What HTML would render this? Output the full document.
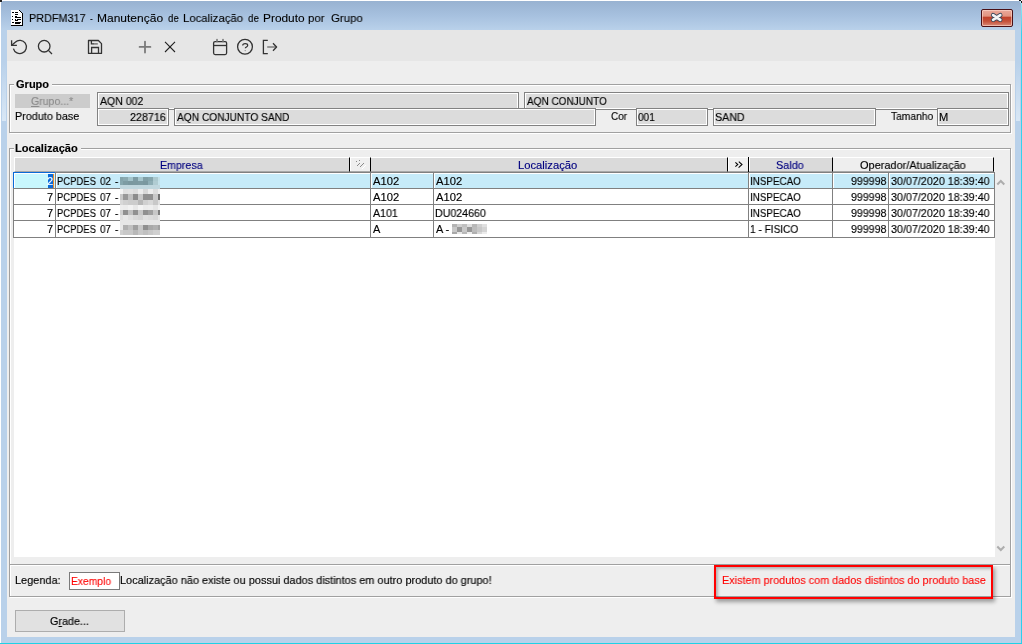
<!DOCTYPE html><html><head><meta charset="utf-8"><style>
*{margin:0;padding:0;box-sizing:border-box}
html,body{width:1022px;height:644px;overflow:hidden;background:#fff;font-family:"Liberation Sans",sans-serif;font-size:11px;color:#000}
.a{position:absolute}
.t{line-height:14px;height:14px;white-space:nowrap;will-change:transform;-webkit-text-stroke:0.15px currentColor}
.b{font-weight:bold}
</style></head><body>
<div class="a" style="left:1px;top:1px;width:1020px;height:642px;background:linear-gradient(#98b2d1 0px,#a7c1df 15px,#b9d1ea 29px,#b9d1ea 100%);border-radius:2px 2px 0 0"></div>
<div class="a" style="left:1021px;top:3px;width:1px;height:641px;background:linear-gradient(#9ce6f4,#36d2ee 30px,#2ccfee 100%)"></div>
<div class="a" style="left:1019px;top:0;width:2px;height:1px;background:#111"></div>
<div class="a" style="left:1021px;top:1px;width:1px;height:2px;background:#111"></div>
<div class="a" style="left:1020px;top:1px;width:1px;height:2px;background:#bdeefa"></div>
<div class="a" style="left:0;top:643px;width:1022px;height:1px;background:#1ed2e6"></div>
<div class="a" style="left:7px;top:30px;width:1008px;height:607px;background:#eeeeee"></div>
<div class="a" style="left:1016px;top:62px;width:4px;height:59px;background:linear-gradient(rgba(217,231,245,0),#d9e7f5)"></div>
<div class="a" style="left:2px;top:62px;width:4px;height:59px;background:linear-gradient(rgba(217,231,245,0),#d9e7f5)"></div>
<div class="a" style="left:7px;top:30px;width:1008px;height:31px;background:#e6e6e6"></div>
<svg class="a" style="left:8px;top:8px" width="18" height="20" viewBox="8 8 18 20" shape-rendering="crispEdges">
 <path d="M11 10 H19 L22 13 V25 H11 Z" fill="#fff"/>
 <g fill="#000">
 <rect x="22" y="13" width="1" height="13"/><rect x="11" y="25" width="12" height="1"/>
 <rect x="19" y="10" width="1" height="1"/><rect x="20" y="11" width="1" height="1"/><rect x="21" y="12" width="1" height="1"/><rect x="22" y="13" width="1" height="1"/>
 <rect x="12" y="12" width="2" height="1"/><rect x="15" y="12" width="3" height="1"/>
 <rect x="15" y="14" width="3" height="1"/>
 <rect x="12" y="16" width="1" height="1"/><rect x="15" y="16" width="2" height="1"/><rect x="15" y="17" width="6" height="1"/>
 <rect x="12" y="19" width="1" height="1"/><rect x="15" y="19" width="1" height="1"/><rect x="17" y="19" width="4" height="1"/><rect x="15" y="20" width="3" height="1"/>
 <rect x="12" y="22" width="2" height="1"/><rect x="15" y="22" width="6" height="1"/><rect x="15" y="23" width="5" height="1"/>
 </g>
</svg>
<div class="a" style="left:0;top:0;width:2px;height:2px;background:#222"></div>
<div class="a t " style="left:29.07px;top:11px;transform:scaleX(0.9283);transform-origin:0 0;font-size:11.7px;-webkit-text-stroke:0.1px currentColor">PRDFM317</div>
<div class="a t " style="left:90.10px;top:11px;transform:scaleX(0.7250);transform-origin:0 0;font-size:11.7px;-webkit-text-stroke:0.1px currentColor">-</div>
<div class="a t " style="left:96.97px;top:11px;transform:scaleX(1.0270);transform-origin:0 0;font-size:11.7px;-webkit-text-stroke:0.1px currentColor">Manutenção</div>
<div class="a t " style="left:168.00px;top:11px;transform:scaleX(0.8308);transform-origin:0 0;font-size:11.7px;-webkit-text-stroke:0.1px currentColor">de</div>
<div class="a t " style="left:182.73px;top:11px;transform:scaleX(0.9721);transform-origin:0 0;font-size:11.7px;-webkit-text-stroke:0.1px currentColor">Localização</div>
<div class="a t " style="left:248.00px;top:11px;transform:scaleX(0.8462);transform-origin:0 0;font-size:11.7px;-webkit-text-stroke:0.1px currentColor">de</div>
<div class="a t " style="left:262.98px;top:11px;transform:scaleX(1.0175);transform-origin:0 0;font-size:11.7px;-webkit-text-stroke:0.1px currentColor">Produto</div>
<div class="a t " style="left:308.42px;top:11px;transform:scaleX(0.9750);transform-origin:0 0;font-size:11.7px;-webkit-text-stroke:0.1px currentColor">por</div>
<div class="a t " style="left:330.90px;top:11px;transform:scaleX(0.9781);transform-origin:0 0;font-size:11.7px;-webkit-text-stroke:0.1px currentColor">Grupo</div>
<div class="a" style="left:981px;top:9px;width:32px;height:18px;border:1px solid #4a1015;border-radius:2px;background:linear-gradient(#eaa99b 0%,#e2937f 40%,#c0402a 42%,#c55039 70%,#d98a78 100%);box-shadow:inset 0 0 0 1px rgba(255,220,210,.6)"></div>
<svg class="a" style="left:981px;top:9px" width="32" height="18" viewBox="981 9 32 18">
 <path d="M993.1 15.1 L1000.3 19.8 M1000.3 15.1 L993.1 19.8" stroke="#37465a" stroke-width="4.4" stroke-linecap="round"/>
 <path d="M993.1 15.1 L1000.3 19.8 M1000.3 15.1 L993.1 19.8" stroke="#f4f4f4" stroke-width="2.7" stroke-linecap="round"/>
</svg>
<svg class="a" style="left:7px;top:30px" width="290" height="31" viewBox="7 30 290 31" fill="none" stroke="#333" stroke-width="1.3">
 <path d="M13.4 48.6 A6.6 6.6 0 1 0 15.2 42.2 L11.8 45.3" />
 <path d="M11.6 40.3 V45.4 H16.9" stroke-linejoin="miter"/>
 <circle cx="44.2" cy="46.2" r="5.8"/>
 <path d="M48.4 50.4 L52 54"/>
 <path d="M88.5 40.5 H98.4 L101.5 43.6 V53.4 H88.5 Z" stroke-linejoin="round"/>
 <path d="M91.4 40.6 V43.9 H94" />
 <path d="M94 43.9 H97.8" stroke="#666"/>
 <path d="M91.6 53.4 V47.5 H98.5 V53.4" />
 <path d="M145 41.6 V52.6 M139.6 46.9 H150.4" stroke="#7a7a7a" stroke-width="1.8" stroke-linecap="round"/>
 <path d="M165 41.8 L175 52 M175 41.8 L165 52" stroke="#222" stroke-width="1.1"/>
 <rect x="213.6" y="41.6" width="13" height="13" rx="1.5"/>
 <path d="M213.8 45.5 H226.4"/>
 <path d="M217 39.6 V41.6 M223 39.6 V41.6" stroke="#777" stroke-width="1.6" stroke-linecap="round"/>
 <circle cx="245" cy="46.8" r="7.4"/>
 <path d="M242.7 45.6 C242.7 44.2 243.8 43.7 245.2 43.7 C246.6 43.7 247.7 44.4 247.7 45.5 C247.7 46.9 245.3 47 245.3 48.2" stroke-width="1.2"/>
 <circle cx="245.2" cy="50.6" r="0.7" fill="#888" stroke="none"/>
 <path d="M267.8 40.4 H263.4 V53.6 H267.8"/>
 <path d="M267.2 47 H276" stroke="#888" stroke-width="1.7"/>
 <path d="M273 43.3 L276.6 47 L273 50.7" stroke-linejoin="round"/>
</svg>
<div class="a" style="left:10px;top:85px;width:1002px;height:49px;border:1px solid #fff"></div>
<div class="a" style="left:9px;top:84px;width:1002px;height:49px;border:1px solid #a0a0a0"></div>
<div class="a" style="left:14px;top:78px;width:38px;height:12px;background:#eeeeee"></div>
<div class="a t " style="left:15.90px;top:77px;transform:scaleX(1.0030);transform-origin:0 0;font-weight:700">Grupo</div>
<div class="a" style="left:15px;top:94px;width:75px;height:14px;background:#cccccc"></div>
<div class="a t " style="left:30.80px;top:94px;transform:scaleX(0.9568);transform-origin:0 0;color:#8c8c8c"><span style="text-decoration:underline">G</span>rupo...*</div>
<div class="a t " style="left:14.92px;top:109px;transform:scaleX(0.9828);transform-origin:0 0">Produto base</div>
<div class="a" style="left:97px;top:92px;width:422px;height:18px;border:1px solid #828282;background:#dcdcdc;box-shadow:inset 1px 1px 0 #fff,inset -1px -1px 0 #fff"></div>
<div class="a t " style="left:100.30px;top:94px;transform:scaleX(0.9556);transform-origin:0 0">AQN 002</div>
<div class="a" style="left:524px;top:92px;width:485px;height:18px;border:1px solid #828282;background:#dcdcdc;box-shadow:inset 1px 1px 0 #fff,inset -1px -1px 0 #fff"></div>
<div class="a t " style="left:527.00px;top:94px;transform:scaleX(0.9091);transform-origin:0 0">AQN CONJUNTO</div>
<div class="a" style="left:97px;top:108px;width:72px;height:18px;border:1px solid #828282;background:#dcdcdc;box-shadow:inset 1px 1px 0 #fff,inset -1px -1px 0 #fff"></div>
<div class="a t " style="left:130.10px;top:110px;transform:scaleX(0.9778);transform-origin:0 0">228716</div>
<div class="a" style="left:174px;top:108px;width:422px;height:18px;border:1px solid #828282;background:#dcdcdc;box-shadow:inset 1px 1px 0 #fff,inset -1px -1px 0 #fff"></div>
<div class="a t " style="left:177.00px;top:110px;transform:scaleX(0.9256);transform-origin:0 0">AQN CONJUNTO SAND</div>
<div class="a t " style="left:610.60px;top:109px;transform:scaleX(0.9056);transform-origin:0 0">Cor</div>
<div class="a" style="left:636px;top:108px;width:72px;height:18px;border:1px solid #828282;background:#dcdcdc;box-shadow:inset 1px 1px 0 #fff,inset -1px -1px 0 #fff"></div>
<div class="a t " style="left:638.30px;top:110px;transform:scaleX(0.9167);transform-origin:0 0">001</div>
<div class="a" style="left:713px;top:108px;width:163px;height:18px;border:1px solid #828282;background:#dcdcdc;box-shadow:inset 1px 1px 0 #fff,inset -1px -1px 0 #fff"></div>
<div class="a t " style="left:714.53px;top:110px;transform:scaleX(0.9724);transform-origin:0 0">SAND</div>
<div class="a t " style="left:891.10px;top:109px;transform:scaleX(0.9333);transform-origin:0 0">Tamanho</div>
<div class="a" style="left:937px;top:108px;width:72px;height:18px;border:1px solid #828282;background:#dcdcdc;box-shadow:inset 1px 1px 0 #fff,inset -1px -1px 0 #fff"></div>
<div class="a t " style="left:938.59px;top:110px;transform:scaleX(1.0125);transform-origin:0 0">M</div>
<div class="a" style="left:10px;top:149px;width:1002px;height:417px;border:1px solid #fff"></div>
<div class="a" style="left:9px;top:148px;width:1002px;height:417px;border:1px solid #a0a0a0"></div>
<div class="a" style="left:14px;top:142px;width:67px;height:12px;background:#eeeeee"></div>
<div class="a t " style="left:15.19px;top:141px;transform:scaleX(1.0066);transform-origin:0 0;font-weight:700">Localização</div>
<div class="a" style="left:14px;top:172px;width:981px;height:385px;background:#fff"></div>
<div class="a" style="left:14px;top:157px;width:980px;height:15px;background:#dadada;border-top:1px solid #fff;border-left:1px solid #fff;border-bottom:1px solid #a8a8a8"></div>
<div class="a" style="left:349px;top:157px;width:22px;height:15px;background:#efefef;border-left:1px solid #000;border-right:1px solid #000;border-top:1px solid #fff;border-bottom:1px solid #a8a8a8;box-shadow:inset 1px 0 0 #fff"></div>
<div class="a" style="left:727px;top:157px;width:22px;height:15px;background:#efefef;border-left:1px solid #000;border-right:1px solid #000;border-top:1px solid #fff;border-bottom:1px solid #a8a8a8;box-shadow:inset 1px 0 0 #fff"></div>
<div class="a" style="left:748px;top:157px;width:1px;height:15px;background:#000"></div>
<div class="a" style="left:749px;top:158px;width:1px;height:13px;background:#fff"></div>
<div class="a" style="left:832px;top:157px;width:162px;height:15px;background:#eeeeee;border-top:1px solid #fff;border-left:1px solid #000;border-right:1px solid #000;border-bottom:1px solid #a8a8a8"></div>
<div class="a t " style="left:159.73px;top:158px;transform:scaleX(0.9674);transform-origin:0 0;color:#000080">Empresa</div>
<div class="a t " style="left:517.98px;top:158px;transform:scaleX(1.0193);transform-origin:0 0;color:#000080">Localização</div>
<div class="a t " style="left:775.71px;top:158px;transform:scaleX(0.9852);transform-origin:0 0;color:#000080">Saldo</div>
<div class="a t " style="left:859.50px;top:158px;transform:scaleX(0.9943);transform-origin:0 0">Operador/Atualização</div>
<svg class="a" style="left:349px;top:157px" width="22" height="15" viewBox="349 157 22 15">
 <g fill="#8a8a8a"><rect x="356" y="161" width="1" height="1"/><rect x="359" y="160" width="1" height="1"/>
 <rect x="357" y="165" width="1" height="1"/><rect x="358" y="164" width="1" height="1"/><rect x="359" y="163" width="1" height="1"/>
 <rect x="360" y="166" width="1" height="1"/><rect x="361" y="165" width="1" height="1"/><rect x="362" y="164" width="1" height="1"/><rect x="363" y="163" width="1" height="1"/></g>
 <g fill="#fff"><rect x="362" y="168" width="1" height="1"/><rect x="363" y="167" width="1" height="1"/><rect x="364" y="166" width="1" height="1"/><rect x="365" y="165" width="1" height="1"/></g>
</svg>
<svg class="a" style="left:727px;top:157px" width="22" height="15" viewBox="727 157 22 15">
 <path d="M735.4 162.3 L737.8 164.5 L735.4 166.7 M738.8 161.6 L742 164.5 L738.6 167.6" fill="none" stroke="#000" stroke-width="1.05"/>
</svg>
<div class="a" style="left:14px;top:173px;width:980px;height:15px;background:#c6ebf9;border-top:1px solid #fff"></div>
<div class="a" style="left:13px;top:172px;width:982px;height:1px;background:#808080"></div>
<div class="a" style="left:13px;top:188px;width:982px;height:1px;background:#808080"></div>
<div class="a" style="left:13px;top:204px;width:982px;height:1px;background:#808080"></div>
<div class="a" style="left:13px;top:220px;width:982px;height:1px;background:#808080"></div>
<div class="a" style="left:13px;top:237px;width:982px;height:1px;background:#808080"></div>
<div class="a" style="left:13px;top:172px;width:1px;height:66px;background:#808080"></div>
<div class="a" style="left:994px;top:172px;width:1px;height:66px;background:#808080"></div>
<div class="a" style="left:55px;top:172px;width:1px;height:66px;background:#808080"></div>
<div class="a" style="left:56px;top:173px;width:1px;height:15px;background:#fff"></div>
<div class="a" style="left:370px;top:172px;width:1px;height:66px;background:#808080"></div>
<div class="a" style="left:371px;top:173px;width:1px;height:15px;background:#fff"></div>
<div class="a" style="left:433px;top:172px;width:1px;height:66px;background:#808080"></div>
<div class="a" style="left:434px;top:173px;width:1px;height:15px;background:#fff"></div>
<div class="a" style="left:748px;top:172px;width:1px;height:66px;background:#808080"></div>
<div class="a" style="left:749px;top:173px;width:1px;height:15px;background:#fff"></div>
<div class="a" style="left:832px;top:172px;width:1px;height:66px;background:#808080"></div>
<div class="a" style="left:833px;top:173px;width:1px;height:15px;background:#fff"></div>
<div class="a" style="left:888px;top:172px;width:1px;height:66px;background:#808080"></div>
<div class="a" style="left:889px;top:173px;width:1px;height:15px;background:#fff"></div>
<div class="a" style="left:13px;top:172px;width:42px;height:16px;background:#c8f7fd;border-top:1px solid #0a6ad8;border-left:1px solid #0a6ad8;box-shadow:inset 1px 1px 0 #fff"></div>
<div class="a" style="left:48px;top:174px;width:5px;height:14px;background:#0a6ad8"></div>
<div class="a" style="left:53px;top:174px;width:1px;height:14px;background:#f08a24"></div>
<div class="a t" style="left:14px;top:174px;width:39px;text-align:right;color:#fff">2</div>
<div class="a t " style="left:57.14px;top:174px;transform:scaleX(0.8591);transform-origin:0 0">PCPDES</div>
<div class="a t " style="left:100.10px;top:174px;transform:scaleX(0.9000);transform-origin:0 0">02</div>
<div class="a t " style="left:115.00px;top:174px;transform:scaleX(0.9000);transform-origin:0 0">-</div>
<div class="a t " style="left:372.60px;top:174px;transform:scaleX(1.0200);transform-origin:0 0">A102</div>
<div class="a t " style="left:436.00px;top:174px;transform:scaleX(1.0200);transform-origin:0 0">A102</div>
<div class="a t " style="left:749.86px;top:174px;transform:scaleX(0.8946);transform-origin:0 0">INSPECAO</div>
<div class="a t " style="left:850.90px;top:174px;transform:scaleX(0.9681);transform-origin:0 0">999998</div>
<div class="a t " style="left:891.00px;top:174px;transform:scaleX(0.9772);transform-origin:0 0">30/07/2020 18:39:40</div>
<div class="a t" style="left:14px;top:190px;width:39px;text-align:right;color:#000">7</div>
<div class="a t " style="left:57.14px;top:190px;transform:scaleX(0.8591);transform-origin:0 0">PCPDES</div>
<div class="a t " style="left:100.10px;top:190px;transform:scaleX(0.9000);transform-origin:0 0">07</div>
<div class="a t " style="left:115.00px;top:190px;transform:scaleX(0.9000);transform-origin:0 0">-</div>
<div class="a t " style="left:372.60px;top:190px;transform:scaleX(1.0200);transform-origin:0 0">A102</div>
<div class="a t " style="left:436.00px;top:190px;transform:scaleX(1.0200);transform-origin:0 0">A102</div>
<div class="a t " style="left:749.86px;top:190px;transform:scaleX(0.8946);transform-origin:0 0">INSPECAO</div>
<div class="a t " style="left:850.90px;top:190px;transform:scaleX(0.9681);transform-origin:0 0">999998</div>
<div class="a t " style="left:891.00px;top:190px;transform:scaleX(0.9772);transform-origin:0 0">30/07/2020 18:39:40</div>
<div class="a t" style="left:14px;top:206px;width:39px;text-align:right;color:#000">7</div>
<div class="a t " style="left:57.14px;top:206px;transform:scaleX(0.8591);transform-origin:0 0">PCPDES</div>
<div class="a t " style="left:100.10px;top:206px;transform:scaleX(0.9000);transform-origin:0 0">07</div>
<div class="a t " style="left:115.00px;top:206px;transform:scaleX(0.9000);transform-origin:0 0">-</div>
<div class="a t " style="left:372.60px;top:206px;transform:scaleX(0.9680);transform-origin:0 0">A101</div>
<div class="a t " style="left:434.83px;top:206px;transform:scaleX(0.9667);transform-origin:0 0">DU024660</div>
<div class="a t " style="left:749.86px;top:206px;transform:scaleX(0.8946);transform-origin:0 0">INSPECAO</div>
<div class="a t " style="left:850.90px;top:206px;transform:scaleX(0.9681);transform-origin:0 0">999998</div>
<div class="a t " style="left:891.00px;top:206px;transform:scaleX(0.9772);transform-origin:0 0">30/07/2020 18:39:40</div>
<div class="a t" style="left:14px;top:222px;width:39px;text-align:right;color:#000">7</div>
<div class="a t " style="left:57.14px;top:222px;transform:scaleX(0.8591);transform-origin:0 0">PCPDES</div>
<div class="a t " style="left:100.10px;top:222px;transform:scaleX(0.9000);transform-origin:0 0">07</div>
<div class="a t " style="left:115.00px;top:222px;transform:scaleX(0.9000);transform-origin:0 0">-</div>
<div class="a t " style="left:373px;top:222px">A</div>
<div class="a t " style="left:436.00px;top:222px;transform:scaleX(0.9846);transform-origin:0 0">A -</div>
<div class="a t " style="left:750.08px;top:222px;transform:scaleX(0.9176);transform-origin:0 0">1 - FISICO</div>
<div class="a t " style="left:850.90px;top:222px;transform:scaleX(0.9681);transform-origin:0 0">999998</div>
<div class="a t " style="left:891.00px;top:222px;transform:scaleX(0.9772);transform-origin:0 0">30/07/2020 18:39:40</div>
<svg class="a" style="left:120px;top:177px" width="40" height="58" viewBox="120 177 40 58" shape-rendering="crispEdges"><rect x="120" y="177" width="3" height="4" fill="#84a4ab"/><rect x="123" y="177" width="5" height="4" fill="#8aaab1"/><rect x="128" y="177" width="5" height="4" fill="#a3c3ca"/><rect x="133" y="177" width="5" height="4" fill="#7d9ca4"/><rect x="138" y="177" width="5" height="4" fill="#a6c5cc"/><rect x="143" y="177" width="5" height="4" fill="#809fa6"/><rect x="148" y="177" width="5" height="4" fill="#86a6ad"/><rect x="153" y="177" width="5" height="4" fill="#abc9cf"/><rect x="158" y="177" width="2" height="4" fill="#c2e0e8"/><rect x="120" y="181" width="3" height="4" fill="#86a7ae"/><rect x="123" y="181" width="5" height="4" fill="#7d9ca3"/><rect x="128" y="181" width="5" height="4" fill="#7a989f"/><rect x="133" y="181" width="5" height="4" fill="#7b99a0"/><rect x="138" y="181" width="5" height="4" fill="#7d9ba2"/><rect x="143" y="181" width="5" height="4" fill="#7a989f"/><rect x="148" y="181" width="5" height="4" fill="#8eaeb5"/><rect x="153" y="181" width="5" height="4" fill="#b0ccd2"/><rect x="158" y="181" width="2" height="4" fill="#c4e2ea"/><rect x="120" y="185" width="3" height="4" fill="#c0d7de"/><rect x="123" y="185" width="5" height="4" fill="#c0d7de"/><rect x="128" y="185" width="5" height="4" fill="#c0d7de"/><rect x="133" y="185" width="5" height="4" fill="#c0d7de"/><rect x="138" y="185" width="5" height="4" fill="#c0d7de"/><rect x="143" y="185" width="5" height="4" fill="#c0d7de"/><rect x="148" y="185" width="5" height="4" fill="#c0d7de"/><rect x="153" y="185" width="5" height="4" fill="#c0d7de"/><rect x="158" y="185" width="2" height="4" fill="#c0d7de"/><rect x="120" y="189" width="3" height="5" fill="#f4f4f4"/><rect x="123" y="189" width="5" height="5" fill="#e0e0e0"/><rect x="128" y="189" width="5" height="5" fill="#e2e2e2"/><rect x="133" y="189" width="5" height="5" fill="#dcdcdc"/><rect x="138" y="189" width="5" height="5" fill="#ececec"/><rect x="143" y="189" width="5" height="5" fill="#d8d8d8"/><rect x="148" y="189" width="5" height="5" fill="#ececec"/><rect x="153" y="189" width="5" height="5" fill="#dcdcdc"/><rect x="158" y="189" width="2" height="5" fill="#eeeeee"/><rect x="120" y="194" width="3" height="6" fill="#c8c8c8"/><rect x="123" y="194" width="5" height="6" fill="#989898"/><rect x="128" y="194" width="5" height="6" fill="#c0c0c0"/><rect x="133" y="194" width="5" height="6" fill="#8c8c8c"/><rect x="138" y="194" width="5" height="6" fill="#c8c8c8"/><rect x="143" y="194" width="5" height="6" fill="#909090"/><rect x="148" y="194" width="5" height="6" fill="#909090"/><rect x="153" y="194" width="5" height="6" fill="#c8c8c8"/><rect x="158" y="194" width="2" height="6" fill="#707070"/><rect x="120" y="200" width="3" height="5" fill="#d8d8d8"/><rect x="123" y="200" width="5" height="5" fill="#d0d0d0"/><rect x="128" y="200" width="5" height="5" fill="#cccccc"/><rect x="133" y="200" width="5" height="5" fill="#cccccc"/><rect x="138" y="200" width="5" height="5" fill="#b8b8b8"/><rect x="143" y="200" width="5" height="5" fill="#d0d0d0"/><rect x="148" y="200" width="5" height="5" fill="#d8d8d8"/><rect x="153" y="200" width="5" height="5" fill="#c8c8c8"/><rect x="158" y="200" width="2" height="5" fill="#e0e0e0"/><rect x="120" y="205" width="3" height="5" fill="#eeeeee"/><rect x="123" y="205" width="5" height="5" fill="#ececec"/><rect x="128" y="205" width="5" height="5" fill="#f2f2f2"/><rect x="133" y="205" width="5" height="5" fill="#e8e8e8"/><rect x="138" y="205" width="5" height="5" fill="#f4f4f4"/><rect x="143" y="205" width="5" height="5" fill="#ececec"/><rect x="148" y="205" width="5" height="5" fill="#eeeeee"/><rect x="153" y="205" width="5" height="5" fill="#e6e6e6"/><rect x="158" y="205" width="2" height="5" fill="#f4f4f4"/><rect x="120" y="210" width="3" height="5" fill="#d0d0d0"/><rect x="123" y="210" width="5" height="5" fill="#909090"/><rect x="128" y="210" width="5" height="5" fill="#c0c0c0"/><rect x="133" y="210" width="5" height="5" fill="#909090"/><rect x="138" y="210" width="5" height="5" fill="#c8c8c8"/><rect x="143" y="210" width="5" height="5" fill="#909090"/><rect x="148" y="210" width="5" height="5" fill="#a0a0a0"/><rect x="153" y="210" width="5" height="5" fill="#c8c8c8"/><rect x="158" y="210" width="2" height="5" fill="#808080"/><rect x="120" y="215" width="3" height="5" fill="#e0e0e0"/><rect x="123" y="215" width="5" height="5" fill="#e8e8e8"/><rect x="128" y="215" width="5" height="5" fill="#e0e0e0"/><rect x="133" y="215" width="5" height="5" fill="#d8d8d8"/><rect x="138" y="215" width="5" height="5" fill="#d4d4d4"/><rect x="143" y="215" width="5" height="5" fill="#e0e0e0"/><rect x="148" y="215" width="5" height="5" fill="#dcdcdc"/><rect x="153" y="215" width="5" height="5" fill="#d8d8d8"/><rect x="158" y="215" width="2" height="5" fill="#e8e8e8"/><rect x="120" y="220" width="3" height="5" fill="#e6e6e6"/><rect x="123" y="220" width="5" height="5" fill="#e6e6e6"/><rect x="128" y="220" width="5" height="5" fill="#e6e6e6"/><rect x="133" y="220" width="5" height="5" fill="#e6e6e6"/><rect x="138" y="220" width="5" height="5" fill="#e6e6e6"/><rect x="143" y="220" width="5" height="5" fill="#e6e6e6"/><rect x="148" y="220" width="5" height="5" fill="#e6e6e6"/><rect x="153" y="220" width="5" height="5" fill="#e6e6e6"/><rect x="158" y="220" width="2" height="5" fill="#e6e6e6"/><rect x="120" y="225" width="3" height="5" fill="#e8e8e8"/><rect x="123" y="225" width="5" height="5" fill="#b0b0b0"/><rect x="128" y="225" width="5" height="5" fill="#c0c0c0"/><rect x="133" y="225" width="5" height="5" fill="#a0a0a0"/><rect x="138" y="225" width="5" height="5" fill="#c8c8c8"/><rect x="143" y="225" width="5" height="5" fill="#909090"/><rect x="148" y="225" width="5" height="5" fill="#a8a8a8"/><rect x="153" y="225" width="5" height="5" fill="#b0b0b0"/><rect x="158" y="225" width="2" height="5" fill="#a0a0a0"/><rect x="120" y="230" width="3" height="5" fill="#d0d0d0"/><rect x="123" y="230" width="5" height="5" fill="#c8c8c8"/><rect x="128" y="230" width="5" height="5" fill="#c8c8c8"/><rect x="133" y="230" width="5" height="5" fill="#b8b8b8"/><rect x="138" y="230" width="5" height="5" fill="#c8c8c8"/><rect x="143" y="230" width="5" height="5" fill="#c0c0c0"/><rect x="148" y="230" width="5" height="5" fill="#c8c8c8"/><rect x="153" y="230" width="5" height="5" fill="#d0d0d0"/><rect x="158" y="230" width="2" height="5" fill="#d0d0d0"/></svg>
<svg class="a" style="left:452px;top:224px" width="35" height="10" viewBox="452 224 35 10" shape-rendering="crispEdges"><rect x="452" y="224" width="5" height="3" fill="#b4b4b4"/><rect x="457" y="224" width="5" height="3" fill="#d0d0d0"/><rect x="462" y="224" width="5" height="3" fill="#c0c0c0"/><rect x="467" y="224" width="5" height="3" fill="#e0e0e0"/><rect x="472" y="224" width="5" height="3" fill="#b8b8b8"/><rect x="477" y="224" width="5" height="3" fill="#d0d0d0"/><rect x="482" y="224" width="5" height="3" fill="#e0e0e0"/><rect x="452" y="227" width="5" height="5" fill="#c8c8c8"/><rect x="457" y="227" width="5" height="5" fill="#989898"/><rect x="462" y="227" width="5" height="5" fill="#c8c8c8"/><rect x="467" y="227" width="5" height="5" fill="#989898"/><rect x="472" y="227" width="5" height="5" fill="#bcbcbc"/><rect x="477" y="227" width="5" height="5" fill="#c8c8c8"/><rect x="482" y="227" width="5" height="5" fill="#d4d4d4"/><rect x="452" y="232" width="5" height="2" fill="#a8a8a8"/><rect x="457" y="232" width="5" height="2" fill="#e8e8e8"/><rect x="462" y="232" width="5" height="2" fill="#b8b8b8"/><rect x="467" y="232" width="5" height="2" fill="#eeeeee"/><rect x="472" y="232" width="5" height="2" fill="#b0b0b0"/><rect x="477" y="232" width="5" height="2" fill="#d8d8d8"/><rect x="482" y="232" width="5" height="2" fill="#ececec"/></svg>
<svg class="a" style="left:995px;top:176px" width="12" height="12" viewBox="995 176 12 12"><path d="M997.3 184.5 L1000.8 181 L1004.3 184.5" fill="none" stroke="#adadad" stroke-width="2"/></svg>
<svg class="a" style="left:995px;top:543px" width="12" height="12" viewBox="995 543 12 12"><path d="M997.3 546.5 L1000.8 550 L1004.3 546.5" fill="none" stroke="#adadad" stroke-width="2"/></svg>
<div class="a" style="left:10px;top:565px;width:1002px;height:33px;border:1px solid #fff"></div>
<div class="a" style="left:9px;top:564px;width:1002px;height:33px;border:1px solid #a0a0a0"></div>
<div class="a t " style="left:14.61px;top:573px;transform:scaleX(0.9932);transform-origin:0 0">Legenda:</div>
<div class="a" style="left:69px;top:572px;width:51px;height:18px;background:#fff;border:1px solid #7a7a7a"></div>
<div class="a t " style="left:70.96px;top:574px;transform:scaleX(0.9357);transform-origin:0 0;color:#ff0000;-webkit-text-stroke:0.1px #ff0000">Exemplo</div>
<div class="a t " style="left:119.61px;top:573px;transform:scaleX(0.9930);transform-origin:0 0">Localização não existe ou possui dados distintos em outro produto do grupo!</div>
<div class="a" style="left:714px;top:565px;width:279px;height:34px;border:2px solid #ff0000;box-shadow:2px 3px 4px rgba(0,0,0,.35),inset 2px 2px 3px rgba(0,0,0,.25)"></div>
<div class="a t " style="left:722.21px;top:573px;transform:scaleX(0.9850);transform-origin:0 0;color:#ff0000;-webkit-text-stroke:0.1px #ff0000">Existem produtos com dados distintos do produto base</div>
<div class="a" style="left:15px;top:610px;width:110px;height:22px;background:#e1e1e1;border:1px solid #adadad"></div>
<div class="a t " style="left:49.90px;top:614px;transform:scaleX(0.9795);transform-origin:0 0">G<span style="text-decoration:underline">r</span>ade...</div>
</body></html>
